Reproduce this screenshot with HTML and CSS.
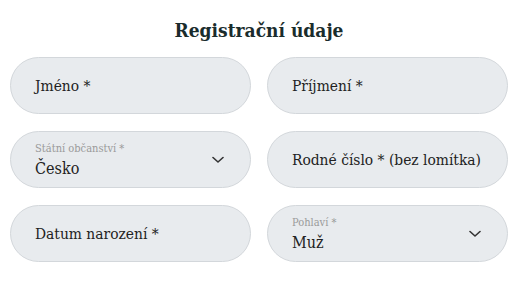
FILE: index.html
```html
<!DOCTYPE html>
<html lang="cs">
<head>
    <meta charset="UTF-8">
    <meta name="viewport" content="width=device-width, initial-scale=1.0">
    <title>Registrační údaje</title>
    <link rel="stylesheet" href="styles.css">
</head>
<body>
    <div class="form-section">
        <h2>Registrační údaje</h2>
        <div class="form-grid">
            <div class="field">
                <span class="value">Jméno *</span>
            </div>
            <div class="field">
                <span class="value">Příjmení *</span>
            </div>
            <div class="field select">
                <div class="field-text">
                    <span class="label">Státní občanství *</span>
                    <span class="value">Česko</span>
                </div>
                <svg class="chevron" width="12" height="8" viewBox="0 0 12 8">
                    <path d="M1 1.5 L6 6 L11 1.5" fill="none" stroke="#333" stroke-width="1.6" stroke-linecap="round" stroke-linejoin="round"/>
                </svg>
            </div>
            <div class="field">
                <span class="value">Rodné číslo * (bez lomítka)</span>
            </div>
            <div class="field">
                <span class="value">Datum narození *</span>
            </div>
            <div class="field select">
                <div class="field-text">
                    <span class="label">Pohlaví *</span>
                    <span class="value">Muž</span>
                </div>
                <svg class="chevron" width="12" height="8" viewBox="0 0 12 8">
                    <path d="M1 1.5 L6 6 L11 1.5" fill="none" stroke="#333" stroke-width="1.6" stroke-linecap="round" stroke-linejoin="round"/>
                </svg>
            </div>
        </div>
    </div>
</body>
</html>
```

FILE: styles.css
```css
body {
    margin: 0;
    background: #fff;
    font-family: "DejaVu Serif", "Liberation Serif", serif;
    font-stretch: condensed;
    color: #222;
}

.form-section {
    padding: 15px 13px 0 10px;
}

h2 {
    margin: 0 0 12px;
    text-align: center;
    font-size: 19px;
    font-weight: bold;
    color: #1a2c2c;
    line-height: 30px;
}

.form-grid {
    display: grid;
    grid-template-columns: 1fr 1fr;
    column-gap: 16px;
    row-gap: 17px;
}

.field {
    height: 57px;
    box-sizing: border-box;
    background: #e8ebee;
    border: 1px solid #d3d7db;
    border-radius: 29px;
    padding: 0 24px;
    display: flex;
    align-items: center;
    justify-content: space-between;
    white-space: nowrap;
}

.field-text {
    display: flex;
    flex-direction: column;
}

.value {
    font-size: 15.4px;
    color: #222;
}

.label {
    font-size: 11px;
    color: #9a9a9a;
    margin-bottom: 4px;
}

.select .value {
    font-size: 16px;
}

.chevron {
    margin-right: 2px;
}
```
